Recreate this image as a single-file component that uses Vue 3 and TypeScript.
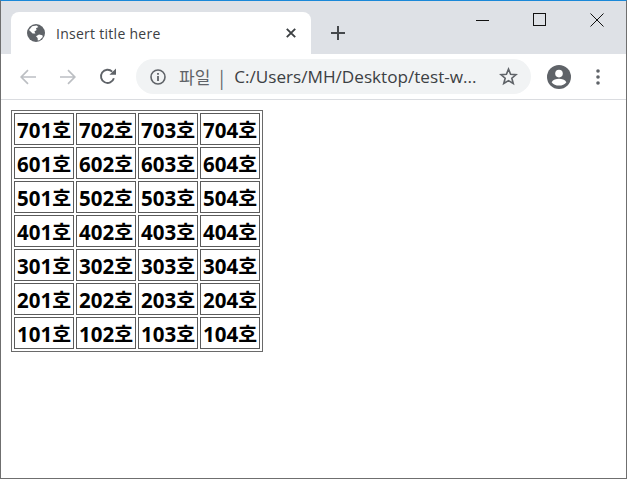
<script setup lang="ts">
const floors: number[] = [7, 6, 5, 4, 3, 2, 1]
const rooms: number[] = [1, 2, 3, 4]
const label = (f: number, r: number): string => `${f}0${r}호`
</script>

<template>
  <div class="window">
    <header class="tabstrip">
      <div class="tab">
        <svg class="globe" viewBox="0 0 18 18" width="18" height="18">
          <circle cx="9" cy="9" r="9" fill="#5f6368" />
          <path fill="#fff" d="M5.2 2.2 9.6 1.4 11.4 3 9 4.2 9.6 6 7.4 7.4 8.4 9.4 5.6 9.4 2 6ZM9 12.2 12 10.6 15.4 11.2 15.8 13 12.5 16.2 10.8 16.4 10.6 14Z" />
        </svg>
        <span class="title">Insert title here</span>
        <svg class="tabclose" viewBox="0 0 10 10" width="10" height="10">
          <path d="M.8.8 9.2 9.2M9.2.8.8 9.2" stroke="#3c4043" stroke-width="1.9" fill="none" />
        </svg>
      </div>
      <svg class="newtab" viewBox="0 0 14 14" width="14" height="14">
        <path d="M7 0v14M0 7h14" stroke="#45484c" stroke-width="2" fill="none" />
      </svg>
      <div class="caption">
        <svg class="capicon" viewBox="0 0 14 14" width="14" height="14"><path d="M0 7.5h13" stroke="#111" fill="none" /></svg>
        <svg class="capicon" viewBox="0 0 14 14" width="14" height="14"><rect x=".5" y=".5" width="12" height="12" stroke="#111" fill="none" /></svg>
        <svg class="capicon" viewBox="0 0 14 14" width="14" height="14"><path d="M.5.5 13.5 13.5M13.5.5.5 13.5" stroke="#111" fill="none" /></svg>
      </div>
    </header>

    <nav class="toolbar">
      <svg class="navicon first" viewBox="0 0 16 16" width="16" height="16">
        <path d="M16 8H1.5M8 1.2 1.2 8 8 14.8" stroke="#bcbfc3" stroke-width="1.7" fill="none" />
      </svg>
      <svg class="navicon" viewBox="0 0 16 16" width="16" height="16">
        <path d="M0 8h14.5M8 1.2 14.8 8 8 14.8" stroke="#bcbfc3" stroke-width="1.7" fill="none" />
      </svg>
      <svg class="navicon reload" viewBox="0 0 16 16" width="17" height="17">
        <path d="M14 9.6A6.2 6.2 0 1 1 12.4 3.4" stroke="#5f6368" stroke-width="1.8" fill="none" />
        <path d="M9.8 6.4H16V.4Z" fill="#5f6368" />
      </svg>
      <div class="omnibox">
        <svg class="info" viewBox="0 0 16 16" width="16" height="16">
          <circle cx="8" cy="8" r="7" stroke="#5f6368" stroke-width="1.6" fill="none" />
          <path d="M8 7v5M8 4v1.8" stroke="#5f6368" stroke-width="1.8" fill="none" />
        </svg>
        <span class="scheme">파일</span>
        <span class="sep">|</span>
        <span class="url">C:/Users/MH/Desktop/test-w...</span>
        <svg class="star" viewBox="0 0 20 20" width="19" height="19">
          <path d="M10 2.2 12.2 7.6 18 8 13.5 11.8 15 17.4 10 14.3 5 17.4 6.5 11.8 2 8 7.8 7.6Z" stroke="#5f6368" stroke-width="1.7" fill="none" />
        </svg>
      </div>
      <svg class="avatar" viewBox="0 0 24 24" width="24" height="24">
        <circle cx="12" cy="12" r="12" fill="#5f6368" />
        <circle cx="12" cy="8.6" r="3.8" fill="#fff" />
        <path d="M4.6 17.2C6 14.6 9.2 13.8 12 13.8S18 14.6 19.4 17.2C17.8 19.4 15 20.6 12 20.6S6.2 19.4 4.6 17.2Z" fill="#fff" />
      </svg>
      <svg class="menu" viewBox="0 0 4 16" width="4" height="16">
        <circle cx="2" cy="2" r="1.8" fill="#5f6368" />
        <circle cx="2" cy="8" r="1.8" fill="#5f6368" />
        <circle cx="2" cy="14" r="1.8" fill="#5f6368" />
      </svg>
    </nav>

    <main class="page">
      <table class="rooms" border="1">
        <tbody>
          <tr v-for="f in floors" :key="f">
            <td v-for="r in rooms" :key="r">{{ label(f, r) }}</td>
          </tr>
        </tbody>
      </table>
    </main>
  </div>
</template>

<style>
html, body { margin: 0; padding: 0; background: #fff; }
</style>

<style scoped>
.window {
  box-sizing: border-box;
  width: 627px;
  height: 479px;
  display: flex;
  flex-direction: column;
  overflow: hidden;
  border: 1px solid #6f6f6f;
  border-top-color: #1a88d8;
  font-family: "Noto Sans CJK KR", "Noto Sans", sans-serif;
}
.tabstrip {
  flex: none;
  height: 53px;
  background: #dee1e6;
  display: flex;
  align-items: flex-end;
  position: relative;
}
.tab {
  box-sizing: border-box;
  width: 300px;
  height: 42px;
  margin-left: 10px;
  background: #fff;
  border-radius: 8px 8px 0 0;
  display: flex;
  align-items: center;
  padding: 0 0 0 16px;
}
.title {
  margin-left: 11px;
  font: 14px "Open Sans", "Noto Sans", sans-serif;
  letter-spacing: 0.27px;
  color: #3c4043;
  flex: 1;
}
.tabclose { margin-right: 15px; }
.newtab { margin: 0 0 14px 20px; }
.caption {
  position: absolute;
  top: 12px;
  right: 22px;
  display: flex;
  gap: 43px;
}
.toolbar {
  flex: none;
  box-sizing: border-box;
  height: 46px;
  background: #fff;
  border-bottom: 1px solid #dadce0;
  display: flex;
  align-items: center;
}
.navicon { margin-left: 24px; flex: none; }
.navicon.first { margin-left: 19px; }
.navicon.reload { margin-left: 23px; }
.omnibox {
  margin-left: 20px;
  width: 395px;
  height: 35px;
  box-sizing: border-box;
  background: #f1f3f4;
  border-radius: 18px;
  display: flex;
  align-items: center;
  padding-left: 14px;
  position: relative;
}
.scheme { margin-left: 13px; font-size: 17px; color: #5f6368; }
.sep { margin-left: 9px; font-size: 18px; color: #5f6368; }
.url { margin-left: 10px; font: 17.15px "Open Sans", "Noto Sans", sans-serif; color: #3c4043; white-space: nowrap; }
.star { position: absolute; right: 13px; top: 8px; }
.avatar { margin-left: 16px; flex: none; }
.menu { margin-left: 25px; flex: none; }
.page { flex: 1; background: #fff; padding: 10px 0 0 10px; }
.rooms {
  border-collapse: separate;
  border-spacing: 2px;
  border: 1px solid #6a6a6a;
}
.rooms td {
  box-sizing: border-box;
  width: 60px;
  height: 32px;
  padding: 2px 0 0;
  border: 1px solid #5a5a5a;
  text-align: center;
  color: #000;
  font: bold 20.5px/28px "Open Sans", "Noto Sans CJK KR", sans-serif;
}
</style>
